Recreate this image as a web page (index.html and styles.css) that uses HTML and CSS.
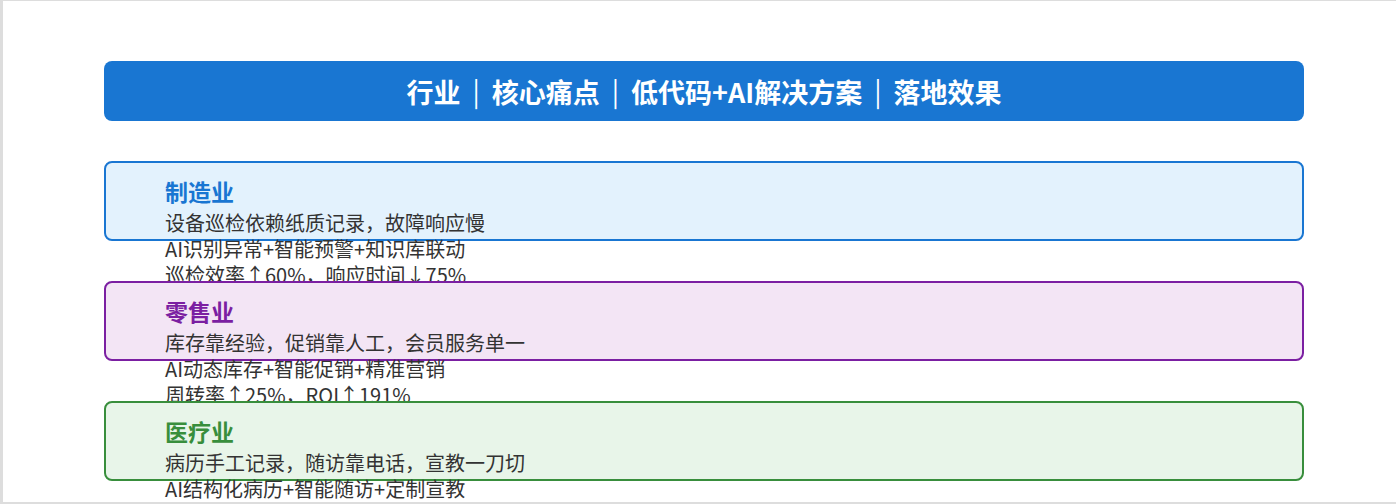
FILE: index.html
```html
<!DOCTYPE html>
<html lang="zh-CN">
<head>
<meta charset="utf-8">
<title>行业方案</title>
<link rel="stylesheet" href="styles.css">
</head>
<body>
<div class="frame">
  <div class="container">
    <div class="header">行业<span class="sep">|</span>核心痛点<span class="sep">|</span>低代码+AI解决方案<span class="sep">|</span>落地效果</div>
    <div class="card card-blue">
      <div class="card-title">制造业</div>
      <div class="card-line">设备巡检依赖纸质记录，故障响应慢</div>
      <div class="card-line">AI识别异常+智能预警+知识库联动</div>
      <div class="card-line">巡检效率↑60%，响应时间↓75%</div>
    </div>
    <div class="card card-purple">
      <div class="card-title">零售业</div>
      <div class="card-line">库存靠经验，促销靠人工，会员服务单一</div>
      <div class="card-line">AI动态库存+智能促销+精准营销</div>
      <div class="card-line">周转率↑25%，ROI↑191%</div>
    </div>
    <div class="card card-green">
      <div class="card-title">医疗业</div>
      <div class="card-line">病历手工记录，随访靠电话，宣教一刀切</div>
      <div class="card-line">AI结构化病历+智能随访+定制宣教</div>
      <div class="card-line">病历效率↑50%，随访率↑40%</div>
    </div>
  </div>
</div>
</body>
</html>
```

FILE: styles.css
```css
html, body {
  margin: 0;
  padding: 0;
  overflow: hidden;
  background: #ffffff;
}

body {
  font-family: "Noto Sans CJK SC", "Noto Sans", sans-serif;
  color: #333333;
}

.frame {
  box-sizing: border-box;
  width: 1408px;
  height: 504px;
  border-style: solid;
  border-color: #dddddd;
  border-width: 1px 3px 2px 3px;
  padding-top: 60px;
  overflow: hidden;
}

.container {
  width: 1200px;
  margin: 0 auto;
  display: flex;
  flex-direction: column;
  gap: 40px;
}

.header {
  height: 60px;
  background: #1976d2;
  border-radius: 8px;
  color: #ffffff;
  font-size: 27px;
  font-weight: 700;
  display: flex;
  align-items: center;
  justify-content: center;
}

.sep {
  font-weight: 400;
  margin: 0 12px;
  position: relative;
  top: -1px;
}

.card {
  box-sizing: border-box;
  height: 80px;
  border: 2px solid;
  border-radius: 8px;
  padding: 13px 20px 0 59px;
}

.card-title {
  font-size: 23px;
  font-weight: 700;
  line-height: 30px;
  margin-bottom: 4px;
}

.card-line {
  font-size: 20px;
  line-height: 26px;
  white-space: nowrap;
}

.card-blue {
  background: #e3f2fd;
  border-color: #1976d2;
}
.card-blue .card-title { color: #1976d2; }

.card-purple {
  background: #f3e5f5;
  border-color: #7b1fa2;
}
.card-purple .card-title { color: #7b1fa2; }

.card-green {
  background: #e8f5e9;
  border-color: #388e3c;
}
.card-green .card-title { color: #388e3c; }
```
